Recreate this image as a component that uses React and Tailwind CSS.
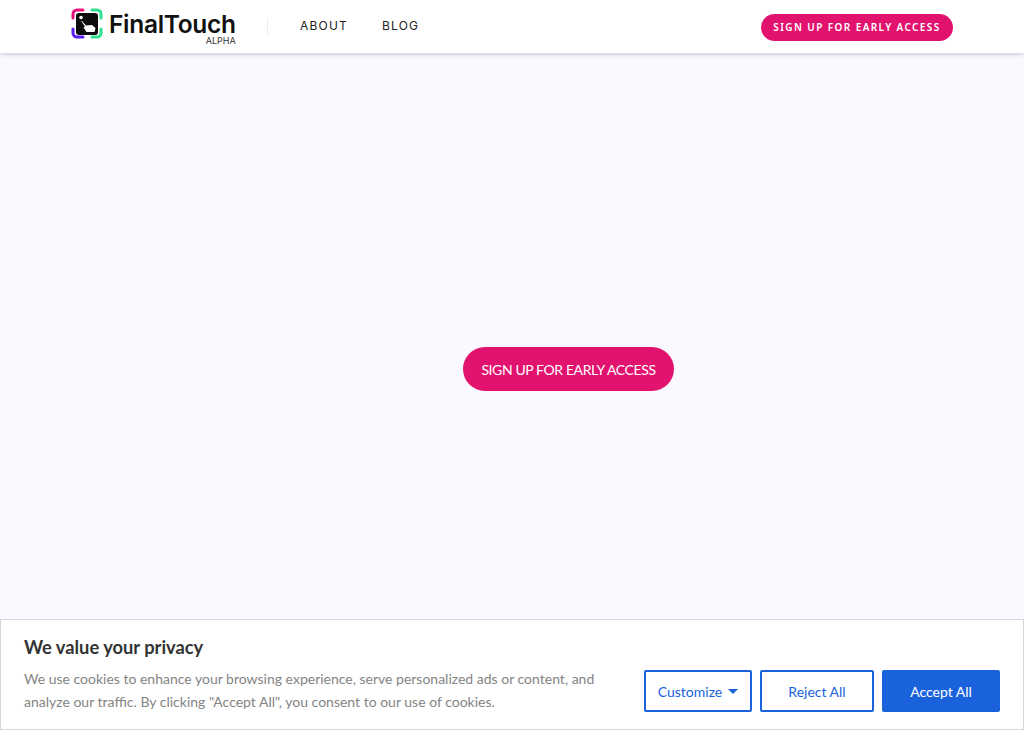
import React from 'react';

const bodyFont = { fontFamily: 'Lato, "Open Sans", sans-serif' };

function Logo() {
  return (
    <svg width="32" height="32" viewBox="0 0 32 32" fill="none" className="mt-[-6px]">
      <path d="M2 10V6a4 4 0 0 1 4-4h6" stroke="#e8137a" strokeWidth="3" strokeLinecap="round" />
      <path d="M21 2h5a4 4 0 0 1 4 4v4" stroke="#2fe08f" strokeWidth="3" strokeLinecap="round" />
      <path d="M30 21v4a4 4 0 0 1-4 4h-5" stroke="#2fe08f" strokeWidth="3" strokeLinecap="round" />
      <path d="M12 29H6a4 4 0 0 1-4-4v-4" stroke="#5a1cf0" strokeWidth="3" strokeLinecap="round" />
      <rect x="5" y="5" width="22" height="22" rx="3" fill="#0d0d0d" />
      <circle cx="10" cy="9.500" r="1.800" fill="#fff" />
      <path d="M10.500 12.500l4.500 5 6-.5 3.500 3-1 4h-8l-3-4.500 1.500-1-3.500-5z" fill="#fff" />
    </svg>
  );
}

export default function App() {
  return (
    <div className="min-h-[730px] bg-[#faf9ff] flex flex-col" style={bodyFont}>
      <header className="h-[53px] bg-white shadow-[0_1px_5px_rgba(0,0,0,0.22)] flex items-center pl-[71px] pr-[71px]">
        <div className="flex items-center w-[196px] h-[53px]">
          <Logo />
          <div className="ml-[6px] relative">
            <span className="block text-[24.500px] leading-[22px] font-semibold text-[#111] tracking-[-0.3px] mt-[-5px]" style={{ fontFamily: 'Inter, sans-serif' }}>
              FinalTouch
            </span>
            <span className="absolute right-0 top-[17px] text-[9px] leading-[11px] text-[#333]" style={{ fontFamily: 'Inter, sans-serif' }}>
              ALPHA
            </span>
          </div>
        </div>
        <div className="w-px h-[17px] bg-[#eeeeee]" />
        <nav className="flex items-center gap-[34px] ml-[32px] mt-[-1px] text-[12px] font-normal tracking-[1.2px] text-[#222]" style={{ fontFamily: 'Inter, sans-serif' }}>
          <a>ABOUT</a>
          <a>BLOG</a>
        </nav>
        <button className="ml-auto h-[27px] w-[192px] rounded-full bg-[#e2136e] text-white text-[10px] font-semibold tracking-[1.400px] mt-[1px]" style={{ fontFamily: '"Noto Sans", sans-serif' }}>
          SIGN UP FOR EARLY ACCESS
        </button>
      </header>

      <main className="flex justify-center pt-[294px] pl-[113px]">
        <button className="h-[44px] w-[211px] rounded-full bg-[#e2136e] text-white text-[14px] font-normal tracking-[-0.400px]">
          SIGN UP FOR EARLY ACCESS
        </button>
      </main>

      <div className="fixed bottom-0 left-0 right-0 h-[111px] bg-white border border-[#d5d5dc] flex items-start pl-[23px] pr-[23px]">
        <div className="w-[590px] pt-[16px]">
          <h2 className="text-[18.300px] leading-[22px] font-bold text-[#333]">We value your privacy</h2>
          <p className="mt-[9px] text-[14px] leading-[23px] text-[#848484]">
            We use cookies to enhance your browsing experience, serve personalized ads or content, and analyze our traffic. By clicking "Accept All", you consent to our use of cookies.
          </p>
        </div>
        <div className="ml-auto flex gap-[8px] pt-[50px] text-[14px]">
          <button className="h-[42px] w-[108px] rounded-[2px] border-2 border-[#1a62dc] text-[#1a62dc] flex items-center justify-center gap-[6px]">
            Customize
            <svg width="10" height="5" viewBox="0 0 10 5"><path d="M0 0h10L5 5z" fill="#1a62dc" /></svg>
          </button>
          <button className="h-[42px] w-[114px] rounded-[2px] border-2 border-[#1a62dc] text-[#1a62dc]">Reject All</button>
          <button className="h-[42px] w-[118px] rounded-[2px] border-2 border-[#1a62dc] bg-[#1a62dc] text-white">Accept All</button>
        </div>
      </div>
    </div>
  );
}
